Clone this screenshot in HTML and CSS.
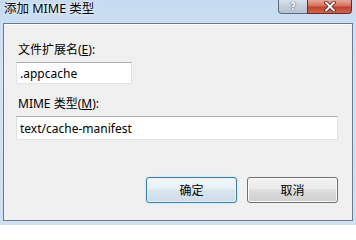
FILE: index.html
```html
<!DOCTYPE html>
<html>
<head>
<meta charset="utf-8">
<link rel="stylesheet" href="styles.css">
</head>
<body>
<div class="window">
  <div class="titlebar">
    <span class="title">添加 MIME 类型</span>
    <div class="caption">
      <div class="cap help"><span>?</span></div>
      <div class="cap close">
        <svg width="14" height="11" viewBox="0 0 14 11">
          <path d="M3 1.5 L11 9.5 M11 1.5 L3 9.5" stroke="#5a1a12" stroke-width="3.6" stroke-linecap="round"/>
          <path d="M3 1.5 L11 9.5 M11 1.5 L3 9.5" stroke="#ffffff" stroke-width="2" stroke-linecap="round"/>
        </svg>
      </div>
    </div>
  </div>
  <div class="client">
    <label class="label">文件扩展名(<u>E</u>):</label>
    <div class="input short">.appcache</div>
    <label class="label second">MIME 类型(<u>M</u>):</label>
    <div class="input long">text/cache-manifest</div>
    <div class="buttons">
      <div class="btn default">确定</div>
      <div class="btn">取消</div>
    </div>
  </div>
</div>
</body>
</html>
```
FILE: styles.css
```css
html, body {
  margin: 0;
  padding: 0;
}
body {
  width: 356px;
  height: 225px;
  overflow: hidden;
  font-family: "Noto Sans", "Noto Sans CJK SC", sans-serif;
  font-size: 12px;
  color: #000;
}
.window {
  width: 356px;
  height: 225px;
  box-sizing: border-box;
  background: linear-gradient(180deg, #c6dbf1 0%, #d3e3f5 30%, #cfe0f3 100%);
  padding: 0 3px 4px 3px;
  display: flex;
  flex-direction: column;
}
.titlebar {
  height: 23px;
  display: flex;
  justify-content: space-between;
  align-items: flex-start;
  flex: none;
}
.title {
  margin-left: 1px;
  margin-top: 1px;
  line-height: 16px;
  font-size: 12.5px;
  text-shadow: 0 0 4px #eef5fc, 0 0 2px #eef5fc;
}
.caption {
  display: flex;
  margin-right: 1px;
}
.cap {
  height: 14px;
  box-sizing: border-box;
  display: flex;
  align-items: center;
  justify-content: center;
  border: 1px solid #5c6a80;
  border-top: none;
}
.help {
  width: 29px;
  border-radius: 0 0 0 4px;
  background: linear-gradient(180deg, #d9e2ec 0%, #c3cfdc 50%, #b4c3d3 100%);
  border-right: none;
}
.help span {
  font-family: "DejaVu Sans", sans-serif;
  font-weight: bold;
  font-size: 11px;
  line-height: 12px;
  color: #fff;
  text-shadow: 0 0 1px #3a4a60, 0 0 1px #3a4a60;
}
.close {
  width: 45px;
  border-radius: 0 0 4px 0;
  background: linear-gradient(180deg, #e8a89a 0%, #d5705e 45%, #c4412b 55%, #d0674f 100%);
  border-color: #6b2a20;
}
.client {
  flex: 1;
  background: #f0f0f0;
  border: 1px solid #6b7a90;
  box-shadow: inset 0 1px 0 #fbfbfb;
  padding: 18px 14px 0 12px;
  display: flex;
  flex-direction: column;
  align-items: flex-start;
}
.label {
  line-height: 16px;
  padding-left: 2px;
  margin-bottom: 4px;
}
.label u {
  text-decoration-thickness: 1px;
  text-underline-offset: 1px;
}
.label.second {
  margin-top: 12px;
}
.input {
  box-sizing: border-box;
  background: #fff;
  border: 1px solid #e2e3ea;
  border-top-color: #abadb3;
  padding: 0 3px;
  display: flex;
  align-items: center;
  font-size: 12px;
}
.short {
  width: 116px;
  height: 22px;
}
.long {
  width: 322px;
  height: 24px;
  border-left-color: #dbdfe6;
}
.buttons {
  align-self: stretch;
  display: flex;
  justify-content: flex-end;
  gap: 10px;
  margin-top: 37px;
}
.btn {
  width: 91px;
  height: 26px;
  box-sizing: border-box;
  border: 1px solid #707070;
  border-radius: 3px;
  background: linear-gradient(180deg, #f2f2f2 0%, #ebebeb 45%, #dddddd 50%, #cfcfcf 100%);
  box-shadow: inset 0 0 0 1px #fcfcfc;
  display: flex;
  align-items: center;
  justify-content: center;
  font-size: 12px;
}
.btn.default {
  border-color: #3c7fb1;
  background: linear-gradient(180deg, #f3f8fb 0%, #e6eff5 45%, #d9e6ee 50%, #cddce6 100%);
  box-shadow: inset 0 0 0 1px #e4f3fb, 0 0 2px #a9d8f2;
}
```
